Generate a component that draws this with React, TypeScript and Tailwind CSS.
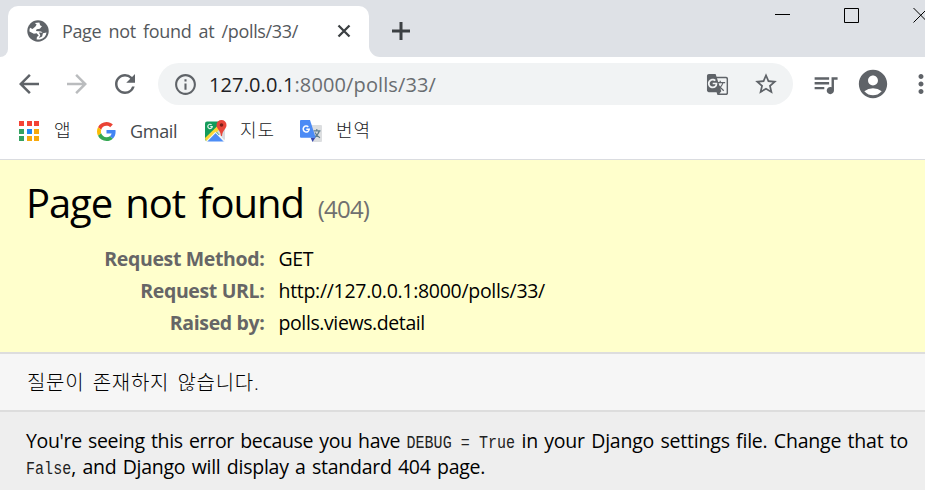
import type { ReactNode } from "react";
import {
  MdAccountCircle,
  MdArrowBack,
  MdArrowForward,
  MdGTranslate,
  MdInfoOutline,
  MdMoreVert,
  MdQueueMusic,
  MdRefresh,
  MdStarBorder,
} from "react-icons/md";

function GlobeIcon() {
  return (
    <svg viewBox="0 0 24 24" className="size-[22px] shrink-0">
      <circle cx="12" cy="12" r="11.700" fill="#5f6368" />
      <path fill="#fff" d="M8.500 3.200 13.500 2.600 14.300 5.800 16.300 6.800 14 9.500 10.500 10 9.800 12 15.500 12.500 17.300 14.500 21.300 13.500Q20.500 19.500 14 21.200L10.500 21.300 10.800 18.500 12.800 17 10.500 14.500 7.500 15 2.700 12.500Q2.500 10.500 3.300 8.500L6 9.800 9.200 7 10.500 5Z" />
      <path fill="#5f6368" d="M13 13.500 17.500 13.800 16.500 18 13 19.500 14.500 16.500Z" />
    </svg>
  );
}

function TabStrip() {
  return (
    <div className="flex h-[57px] items-end bg-[#dee1e6]">
      <div className="h-2 w-2 bg-white">
        <div className="h-2 w-2 rounded-br-lg bg-[#dee1e6]" />
      </div>
      <div className="flex h-[51px] w-[361px] items-center rounded-t-[10px] bg-white pr-[18px] pb-px pl-[19px]">
        <GlobeIcon />
        <span className="ml-[13px] flex-1 text-[18px] tracking-[-0.36px] whitespace-nowrap text-[#54585c] [word-spacing:3px]">
          Page not found at /polls/33/
        </span>
        <svg viewBox="0 0 14 14" className="size-[14px]" fill="none" stroke="#3c4043" strokeWidth="2.3">
          <path d="M1.500 1.500 12.500 12.500M12.500 1.500 1.500 12.500" />
        </svg>
      </div>
      <div className="h-[11px] w-[11px] bg-white">
        <div className="h-[11px] w-[11px] rounded-bl-[11px] bg-[#dee1e6]" />
      </div>
      <svg viewBox="0 0 18 18" className="mb-[17px] ml-3 size-[18px]" fill="none" stroke="#3c4043" strokeWidth="3">
        <path d="M9 0V18M0 9H18" />
      </svg>
      <div className="flex h-full flex-1 justify-end overflow-hidden">
        <svg viewBox="0 0 150 57" className="h-[57px] w-[150px] shrink-0" fill="none" stroke="#000">
          <path d="M0 14.500H15M69.500 8.500H83.500V22.500H69.500ZM138.500 8 153 22.500M153 8 138.500 22.500" />
        </svg>
      </div>
    </div>
  );
}

function Toolbar() {
  return (
    <div className="flex h-[54px] items-center overflow-hidden pl-[14px] text-[#5f6368]">
      <MdArrowBack className="size-[30px] shrink-0" />
      <MdArrowForward className="ml-[18px] size-[30px] shrink-0 text-[#babcbe]" />
      <MdRefresh className="ml-[18px] size-[30px] shrink-0" />
      <div className="ml-[18px] flex h-[42px] w-[635px] shrink-0 items-center rounded-full bg-[#f1f3f4] pr-[14px] pl-[15px]">
        <MdInfoOutline className="size-[25px] shrink-0" />
        <span className="ml-[11px] flex-1 pt-px text-[20px] tracking-[0.12px] whitespace-nowrap text-[#696d71]">
          <span className="text-[#202124]">127.0.0.1</span>:8000/polls/33/
        </span>
        <MdGTranslate className="mr-[24px] size-[23px] shrink-0" />
        <MdStarBorder className="size-[26px] shrink-0" />
      </div>
      <MdQueueMusic className="ml-[17.500px] size-[29px] shrink-0" />
      <MdAccountCircle className="ml-[16.500px] size-[34px] shrink-0" />
      <MdMoreVert className="ml-[16px] size-[30px] shrink-0" />
    </div>
  );
}

const appDots = [
  "#f44336", "#f44336", "#f44336",
  "#34a262", "#1e88f5", "#f8a90c",
  "#34a262", "#f8a90c", "#f8a90c",
];

function AppsIcon() {
  return (
    <div className="grid size-5 grid-cols-3 gap-[2.5px]">
      {appDots.map((color, i) => (
        <div key={i} style={{ backgroundColor: color }} />
      ))}
    </div>
  );
}

function GoogleIcon() {
  return (
    <svg viewBox="0 0 48 48" className="size-[19px]">
      <path fill="#ea4335" d="M24 9.5c3.54 0 6.71 1.22 9.21 3.6l6.85-6.85C35.9 2.38 30.47 0 24 0 14.62 0 6.51 5.38 2.56 13.22l7.98 6.19C12.43 13.72 17.74 9.5 24 9.5z" />
      <path fill="#4285f4" d="M46.98 24.55c0-1.57-.15-3.09-.38-4.55H24v9.02h12.94c-.58 2.96-2.26 5.48-4.78 7.18l7.73 6c4.51-4.18 7.09-10.36 7.09-17.65z" />
      <path fill="#fbbc05" d="M10.53 28.59c-.48-1.45-.76-2.99-.76-4.59s.27-3.14.76-4.59l-7.98-6.19C.92 16.46 0 20.12 0 24c0 3.88.92 7.54 2.56 10.78l7.97-6.19z" />
      <path fill="#34a853" d="M24 48c6.48 0 11.93-2.13 15.89-5.81l-7.73-6c-2.15 1.45-4.92 2.3-8.16 2.3-6.26 0-11.57-4.22-13.47-9.91l-7.98 6.19C6.51 42.62 14.62 48 24 48z" />
    </svg>
  );
}

function MapsIcon() {
  return (
    <svg viewBox="0 0 24 24" className="size-6">
      <path fill="#149b5b" d="M3 2.500H17L20 12 8 22H3Q1 22 1 20V4.500Q1 2.500 3 2.500Z" />
      <path fill="#dadce0" d="M12.500 12.500 19 7 21 9V20Q21 21 20 21Z" />
      <path fill="#fdd835" d="M1 19 15.500 5 18 8 3 22.500Q1 22 1 19Z" />
      <path fill="#4d8df6" d="M3 22.500 11.800 13.600 20 22.500Z" />
      <path fill="none" stroke="#f3f4f5" strokeWidth="1.100" d="M11.800 13.600 20.500 22.500M2.500 22.500 11.800 13.200" />
      <path fill="none" stroke="#e8f5ee" strokeWidth="1.200" d="M7.600 5.900A2.200 2.200 0 1 0 8.200 7.700H6.300" />
      <path fill="#e8453a" d="M17.500 1a5 5 0 0 1 5 5c0 4-4 5-4.500 11h-1C16.500 11 12.500 10 12.500 6a5 5 0 0 1 5-5Z" />
      <circle cx="17.500" cy="6" r="1.800" fill="#7c1f1a" />
    </svg>
  );
}

function TranslateIcon() {
  return (
    <svg viewBox="0 0 24 24" className="size-6">
      <path fill="#dcdee0" d="M10 6H22Q23 6 23 7V22Q23 23 22 23H14Z" />
      <path fill="none" stroke="#607d8b" strokeWidth="1.200" d="M14.500 11.800H21.500M17.800 10V11.800M20.300 12Q19 16.500 15 18.500M16 13.500Q17.500 17 21 18.800" />
      <path fill="#3949ab" d="M11.500 18.500H16.500L13.500 23Z" />
      <path fill="#4c8bf5" d="M2 1H11L16.700 18.800H2Q1 18.800 1 17.800V2Q1 1 2 1Z" />
      <path fill="none" stroke="#fff" strokeWidth="1.500" d="M9.300 7.900A3 3 0 1 0 10.200 10.300H7.300" />
    </svg>
  );
}

function Bookmark({ icon, label, className, labelClass }: { icon: ReactNode; label: string; className: string; labelClass: string }) {
  return (
    <div className={`flex items-center ${className}`}>
      {icon}
      <span className={`whitespace-nowrap ${labelClass}`}>{label}</span>
    </div>
  );
}

function BookmarksBar() {
  return (
    <div className="flex h-[49px] items-center border-b border-[#dadce0] pb-[8px] pl-[19px] text-[18px] leading-6 text-[#45494d]">
      <Bookmark icon={<AppsIcon />} label="앱" className="w-[78px] gap-[15px]" labelClass="pb-[2px] font-light text-[#202124]" />
      <Bookmark icon={<GoogleIcon />} label="Gmail" className="w-[107px] gap-[14px] pt-px" labelClass="pb-[2px] tracking-[-0.3px]" />
      <Bookmark icon={<MapsIcon />} label="지도" className="w-[95px] gap-[12px]" labelClass="pb-[2px] font-light tracking-[1px] text-[#202124]" />
      <Bookmark icon={<TranslateIcon />} label="번역" className="gap-[13px]" labelClass="pb-[2px] font-light tracking-[1px] text-[#202124]" />
    </div>
  );
}

function MetaRow({ label, value, className }: { label: string; value: string; className: string }) {
  return (
    <div className="flex h-8 items-center">
      <span className="w-[238.500px] text-right font-bold tracking-[-0.35px] text-[#666]">{label}</span>
      <span className={`ml-[14px] ${className}`}>{value}</span>
    </div>
  );
}

function Code({ children }: { children: ReactNode }) {
  return (
    <code className="inline-block origin-[50%_75%] scale-y-120 font-['Liberation_Mono',monospace] text-[15px] leading-none tracking-[0.05px] whitespace-pre text-[#222] [word-spacing:0px]">
      {children}
    </code>
  );
}

export default function App() {
  return (
    <div className="flex h-[490px] w-[925px] flex-col overflow-hidden bg-white font-['Open_Sans','Noto_Sans_CJK_KR',sans-serif]">
      <TabStrip />
      <Toolbar />
      <BookmarksBar />
      <main className="flex flex-1 flex-col text-[19.5px] text-black">
        <header className="h-[194px] border-b-2 border-[#ddd] bg-[#ffffcc] pt-4 pl-[26px]">
          <h1 className="flex h-[54px] items-baseline text-[40px] leading-[54px] font-normal tracking-[-1.1px] whitespace-nowrap [word-spacing:4px]">
            Page not found
            <span className="ml-[14px] text-[24px] tracking-[-0.8px] text-[#707070]">(404)</span>
          </h1>
          <div className="mt-[13px]">
            <MetaRow label="Request Method:" value="GET" className="tracking-[-0.4px]" />
            <MetaRow label="Request URL:" value="http://127.0.0.1:8000/polls/33/" className="tracking-[-0.3px]" />
            <MetaRow label="Raised by:" value="polls.views.detail" className="tracking-[-0.4px]" />
          </div>
        </header>
        <section className="flex h-[58px] items-center border-b-2 border-[#ddd] bg-[#f6f6f6] pt-[2px] pl-[27px] text-[20px] font-light tracking-[0.7px] [word-spacing:2.5px]">
          질문이 존재하지 않습니다.
        </section>
        <footer className="flex-1 bg-[#eee] pt-4 pl-[26px] leading-[26px] whitespace-nowrap [word-spacing:1.5px]">
          <p className="h-[26px]">
            <span className="tracking-[-0.33px]">You're seeing this error because you have </span>
            <Code>DEBUG = True</Code>
            <span className="tracking-[-0.21px]"> in your Django settings file. Change that to</span>
          </p>
          <p className="h-[26px] tracking-[-0.25px]">
            <Code>False</Code>, and Django will display a standard 404 page.
          </p>
        </footer>
      </main>
    </div>
  );
}
